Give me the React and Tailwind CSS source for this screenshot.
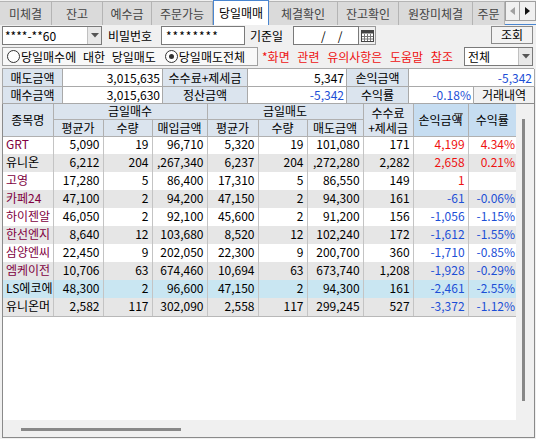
import React from 'react';

const tabs = [
  { label: '미체결', w: 'w-[52px]' },
  { label: '잔고', w: 'w-[51px]' },
  { label: '예수금', w: 'w-[49px]' },
  { label: '주문가능', w: 'w-[61px]' },
  { label: '당일매매', w: 'w-[56px]', active: true },
  { label: '체결확인', w: 'w-[69px]' },
  { label: '잔고확인', w: 'w-[61px]' },
  { label: '원장미체결', w: 'w-[74px]' },
  { label: '주문', w: 'w-[32px]' },
];

const MAROON = 'text-[#800040]';
const BLUE = 'text-[#1c4fd6]';
const RED = 'text-[#ee1111]';

const rows = [
  ['GRT', MAROON, '5,090', '19', '96,710', '5,320', '19', '101,080', '171', '4,199', '4.34%', 'bg-white'],
  ['유니온', 'text-black', '6,212', '204', ',267,340', '6,237', '204', ',272,280', '2,282', '2,658', '0.21%', 'bg-[#e6e6e6]'],
  ['고영', MAROON, '17,280', '5', '86,400', '17,310', '5', '86,550', '149', '1', '', 'bg-white'],
  ['카페24', MAROON, '47,100', '2', '94,200', '47,150', '2', '94,300', '161', '-61', '-0.06%', 'bg-[#e6e6e6]'],
  ['하이젠알', MAROON, '46,050', '2', '92,100', '45,600', '2', '91,200', '156', '-1,056', '-1.15%', 'bg-white'],
  ['한선엔지', MAROON, '8,640', '12', '103,680', '8,520', '12', '102,240', '172', '-1,612', '-1.55%', 'bg-[#e6e6e6]'],
  ['삼양엔씨', MAROON, '22,450', '9', '202,050', '22,300', '9', '200,700', '360', '-1,710', '-0.85%', 'bg-white'],
  ['엠케이전', MAROON, '10,706', '63', '674,460', '10,694', '63', '673,740', '1,208', '-1,928', '-0.29%', 'bg-[#e6e6e6]'],
  ['LS에코에', 'text-black', '48,300', '2', '96,600', '47,150', '2', '94,300', '161', '-2,461', '-2.55%', 'bg-[#c9e6f2]'],
  ['유니온머', 'text-black', '2,582', '117', '302,090', '2,558', '117', '299,245', '527', '-3,372', '-1.12%', 'bg-[#e6e6e6]'],
];

const DownArrow = () => (
  <svg width="8" height="5" viewBox="0 0 8 5"><path d="M0 0h8L4 4.5z" fill="#555" /></svg>
);

const Radio = ({ checked }) => (
  <span className="w-[13px] h-[13px] rounded-full border border-[#333] bg-white flex items-center justify-center shrink-0">
    {checked && <span className="w-[5px] h-[5px] rounded-full bg-[#333]" />}
  </span>
);

const CalendarIcon = () => (
  <svg width="13" height="12" viewBox="0 0 13 12">
    <rect x="0.5" y="0.5" width="12" height="11" fill="#fff" stroke="#444" />
    <rect x="0.5" y="0.5" width="12" height="3" fill="#444" />
    <path d="M3.5 4v7M6.5 4v7M9.5 4v7M1 6.5h11M1 9h11" stroke="#777" strokeWidth="1" />
  </svg>
);

const Funnel = () => (
  <svg width="9" height="11" viewBox="0 0 9 11">
    <path d="M0.5 0.5h8L5.5 5v5l-2-1.5V5z" fill="none" stroke="#555" />
  </svg>
);

const SumLabel = ({ children, className = '' }) => (
  <div className={`bg-[#dbe4ee] border-r border-b border-[#a9a9a9] flex items-center justify-center ${className}`}>{children}</div>
);
const SumValue = ({ children, className = '' }) => (
  <div className={`bg-white border-r border-b border-[#a9a9a9] flex items-center justify-end pr-[2px] ${className}`}>{children}</div>
);

export default function App() {
  return (
    <div className="w-[536px] h-[439px] bg-[#f0f0f0] overflow-hidden font-['Noto_Sans_CJK_KR',sans-serif] text-[12px] leading-none text-black">
      {/* tab bar */}
      <div className="h-[25px] flex items-start border-b border-[#4a86d0]">
        {tabs.map((t) =>
          t.active ? (
            <div key={t.label} className={`${t.w} h-[25px] bg-white border-x border-t border-[#4a86d0] flex items-center justify-center relative z-10`}>
              {t.label}
            </div>
          ) : (
            <div key={t.label} className={`${t.w} h-[24px] mt-px bg-[#dadada] border-r border-t border-[#b4b4b4] text-[#444] flex items-center justify-center overflow-hidden whitespace-nowrap`}>
              {t.label}
            </div>
          )
        )}
        <div className="flex mt-[1px]">
          <div className="w-[15px] h-[20px] border border-[#a0a0a0] bg-[#f0f0f0] flex items-center justify-center">
            <svg width="5" height="8" viewBox="0 0 5 8"><path d="M5 0v8L0 4z" fill="#a0a0a0" /></svg>
          </div>
          <div className="w-[16px] h-[20px] border border-l-0 border-[#a0a0a0] bg-[#f0f0f0] flex items-center justify-center">
            <svg width="5" height="8" viewBox="0 0 5 8"><path d="M0 0v8L5 4z" fill="#111" /></svg>
          </div>
        </div>
      </div>

      {/* account row */}
      <div className="h-[19px] mt-[1px] flex items-center pl-[2px]">
        <div className="w-[100px] h-[19px] border border-[#7a7a7a] bg-white flex">
          <span className="flex-1 flex items-center pl-[2px]">****-**60</span>
          <span className="w-[14px] bg-[#e8e8e8] border-l border-[#c0c0c0] flex items-center justify-center"><DownArrow /></span>
        </div>
        <span className="ml-[6px] w-[53px]">비밀번호</span>
        <div className="w-[84px] h-[19px] border border-[#7a7a7a] bg-white flex items-center pl-[4px] tracking-[1px]">********</div>
        <span className="ml-[5px] w-[43px]">기준일</span>
        <div className="w-[66px] h-[19px] border border-[#7a7a7a] bg-white flex items-center pl-[27px] gap-[12px]">
          <span>/</span><span>/</span>
        </div>
        <div className="w-[17px] h-[19px] border border-l-0 border-[#9a9a9a] bg-[#f0f0f0] flex items-center justify-center"><CalendarIcon /></div>
        <div className="ml-auto mr-[3px] w-[42px] h-[18px] border border-[#8a8a8a] bg-[#f2f2f2] flex items-center justify-center self-start">조회</div>
      </div>

      {/* option row */}
      <div className="h-[19px] mt-[2px] flex items-center pl-[2px]">
        <div className="w-[256px] h-[19px] border border-[#a0a0a0] bg-[#f8f8f8] flex items-center pl-[4px] [word-spacing:4px]">
          <Radio />
          <span className="ml-[1px]">당일매수에 대한 당일매도</span>
          <span className="ml-[9px] flex items-center"><Radio checked /></span>
          <span className="ml-[1px]">당일매도전체</span>
        </div>
        <span className="ml-[4px] w-[202px] text-[#ee1111] whitespace-nowrap [word-spacing:5px]">*화면 관련 유의사항은 도움말 참조</span>
        <div className="w-[69px] h-[19px] border border-[#7a7a7a] bg-white flex">
          <span className="flex-1 flex items-center pl-[3px]">전체</span>
          <span className="w-[14px] bg-[#e8e8e8] border-l border-[#c0c0c0] flex items-center justify-center"><DownArrow /></span>
        </div>
      </div>

      {/* summary */}
      <div className="mt-[2px] ml-[2px] w-[532px] grid grid-cols-[60px_100px_85px_99px_62px_65px_61px] grid-rows-[18px_17px] border-l border-t border-[#a9a9a9]">
        <SumLabel>매도금액</SumLabel>
        <SumValue>3,015,635</SumValue>
        <SumLabel>수수료+제세금</SumLabel>
        <SumValue>5,347</SumValue>
        <SumLabel>손익금액</SumLabel>
        <SumValue className={`col-span-2 ${BLUE}`}>-5,342</SumValue>
        <SumLabel>매수금액</SumLabel>
        <SumValue>3,015,630</SumValue>
        <SumLabel>정산금액</SumLabel>
        <SumValue className={BLUE}>-5,342</SumValue>
        <SumLabel>수익률</SumLabel>
        <SumValue className={BLUE}>-0.18%</SumValue>
        <div className="bg-[#f2f2f2] border-r border-b border-[#8a8a8a] flex items-center justify-center">거래내역</div>
      </div>

      {/* grid */}
      <div className="ml-[2px] w-[533px] h-[334px] border-l border-r border-b border-[#8a8a8a] flex flex-col">
        <div className="flex h-[316px]">
          <div className="w-[513px] bg-white overflow-hidden">
            <table className="table-fixed border-collapse w-[513px]">
              <colgroup>
                <col className="w-[50px]" />
                <col className="w-[50px]" />
                <col className="w-[49px]" />
                <col className="w-[55px]" />
                <col className="w-[51px]" />
                <col className="w-[49px]" />
                <col className="w-[56px]" />
                <col className="w-[50px]" />
                <col className="w-[55px]" />
                <col className="w-[48px]" />
              </colgroup>
              <thead>
                <tr className="h-[15px]">
                  <th rowSpan={2} className="bg-[#dbe4ee] border-r border-b border-[#b0b0b0] font-normal">종목명</th>
                  <th colSpan={3} className="bg-[#dbe4ee] border-r border-b border-[#b0b0b0] font-normal">금일매수</th>
                  <th colSpan={3} className="bg-[#dbe4ee] border-r border-b border-[#b0b0b0] font-normal">금일매도</th>
                  <th rowSpan={2} className="bg-[#dbe4ee] border-r border-b border-[#b0b0b0] font-normal leading-[15px]">수수료<br />+제세금</th>
                  <th rowSpan={2} className="bg-[#c6ddf1] border-r border-b border-[#b0b0b0] font-normal relative">
                    손익금액
                    <span className="absolute right-[5px] top-[9px]"><Funnel /></span>
                  </th>
                  <th rowSpan={2} className="bg-[#c6ddf1] border-b border-[#b0b0b0] font-normal">수익률</th>
                </tr>
                <tr className="h-[17px]">
                  {['평균가', '수량', '매입금액', '평균가', '수량', '매도금액'].map((h, i) => (
                    <th key={i} className="bg-[#dbe4ee] border-r border-b border-[#b0b0b0] font-normal">{h}</th>
                  ))}
                </tr>
              </thead>
              <tbody>
                {rows.map((r, ri) => {
                  const neg = r[9].startsWith('-');
                  const pc = neg ? BLUE : RED;
                  const last = ri === rows.length - 1 ? 'border-b border-b-[#b8b8b8]' : '';
                  return (
                    <tr key={r[0]} className={`h-[18px] ${r[11]}`}>
                      <td className={`border-r border-[#c4c4c4] pl-[3px] pb-[2px] whitespace-nowrap overflow-hidden ${r[1]} ${last}`}>{r[0]}</td>
                      {r.slice(2, 9).map((v, i) => (
                        <td key={i} className={`border-r border-[#c4c4c4] text-right pr-[3px] pb-[2px] whitespace-nowrap overflow-hidden ${last}`}>{v}</td>
                      ))}
                      <td className={`border-r border-[#c4c4c4] text-right pr-[3px] pb-[2px] ${pc} ${last}`}>{r[9]}</td>
                      <td className={`text-right pr-[1px] pb-[2px] whitespace-nowrap overflow-hidden ${pc} ${last}`}>{r[10]}</td>
                    </tr>
                  );
                })}
              </tbody>
            </table>
          </div>
          <div className="flex-1 pt-[15px] pl-[6px]">
            <div className="w-[3px] h-[282px] bg-[#888]" />
          </div>
        </div>
        <div className="flex-1 pl-[18px] pt-[8px]">
          <div className="w-[160px] h-[3px] bg-[#888]" />
        </div>
      </div>
    </div>
  );
}
